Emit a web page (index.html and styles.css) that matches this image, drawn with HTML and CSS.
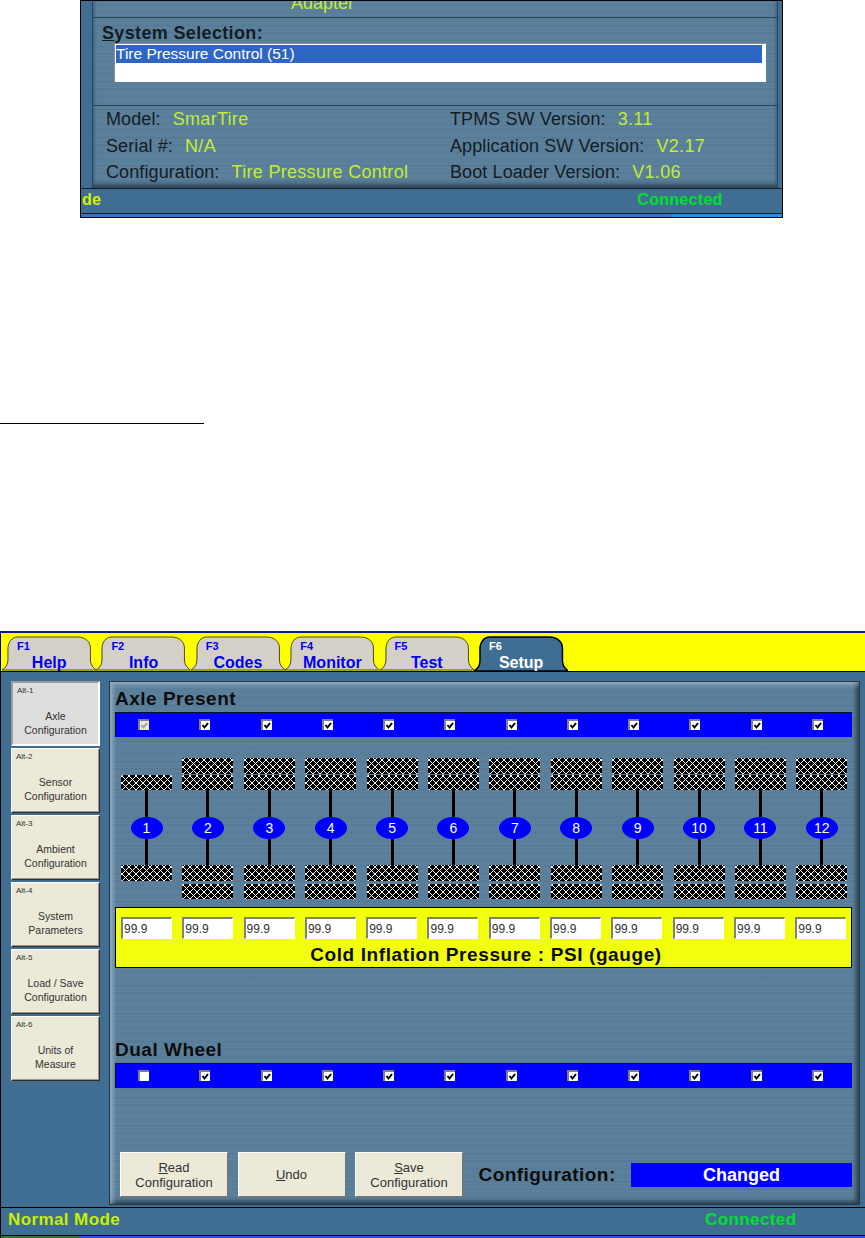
FILE: index.html
```html
<!DOCTYPE html>
<html lang="en">
  <head>
    <meta charset="UTF-8" />
    <meta name="viewport" content="width=device-width, initial-scale=1.0" />
    <title>TPMS Setup</title>
    <link rel="stylesheet" href="styles.css">
  </head>
  <body>
    <div class="shot">
      <div class="shot-panel">
        <div class="adapter"><span>Adapter</span></div>
        <div class="selection">
          <div class="selection-title"><u>S</u>ystem Selection:</div>
          <div class="listbox">
            <div class="listbox-item">Tire Pressure Control (51)</div>
          </div>
        </div>
        <div class="info">
          <div class="info-col">
            <div>Model: <span class="val">SmarTire</span></div>
            <div>Serial #: <span class="val">N/A</span></div>
            <div>Configuration: <span class="val">Tire Pressure Control</span></div>
          </div>
          <div class="info-col">
            <div>TPMS SW Version: <span class="val">3.11</span></div>
            <div>Application SW Version: <span class="val">V2.17</span></div>
            <div>Boot Loader Version: <span class="val">V1.06</span></div>
          </div>
        </div>
      </div>
      <div class="shot-status">
        <span class="mode">de</span>
        <span class="connected">Connected</span>
      </div>
      <div class="shot-strip"></div>
    </div>

    <div class="rule"></div>

    <div class="app">
      <div class="tabs" id="tabs"></div>
      <div class="main">
        <div class="side" id="side"></div>
        <div class="panel">
          <h2 class="title">Axle Present</h2>
          <div class="bar" id="axleChecks"></div>
          <div class="axles" id="axles"></div>
          <div class="pressure">
            <div class="pressure-row" id="pressures"></div>
            <div class="pressure-label">Cold Inflation Pressure : PSI (gauge)</div>
          </div>
          <h2 class="title title-dual">Dual Wheel</h2>
          <div class="bar" id="dualChecks"></div>
          <div class="actions">
            <button class="btn"><u>R</u>ead<br>Configuration</button>
            <button class="btn"><u>U</u>ndo</button>
            <button class="btn"><u>S</u>ave<br>Configuration</button>
            <span class="config-label">Configuration:</span>
            <span class="config-state">Changed</span>
          </div>
        </div>
      </div>
      <div class="status">
        <span class="status-mode">Normal Mode</span>
        <span class="status-conn">Connected</span>
      </div>
      <div class="strip"></div>
    </div>

    <script>
      const tabs = ["Help", "Info", "Codes", "Monitor", "Test", "Setup"];
      const sideItems = ["Axle<br>Configuration", "Sensor<br>Configuration", "Ambient<br>Configuration", "System<br>Parameters", "Load / Save<br>Configuration", "Units of<br>Measure"];
      const axleNumbers = [1, 2, 3, 4, 5, 6, 7, 8, 9, 10, 11, 12];
      const tabPath = "M0 34C4 32 6 28 6 24V13C6 6 10 1 16 1H76C84 1 89 6 89 12V24C89 29 92 32 95 34Z";

      document.getElementById("tabs").innerHTML = tabs.map((name, i) => `
        <div class="tab ${name === "Setup" ? "tab-active" : ""}">
          <svg class="tab-shape" viewBox="0 0 95 35" preserveAspectRatio="none"><path d="${tabPath}"/></svg>
          <div class="tab-key">F${i + 1}</div>
          <div class="tab-name">${name}</div>
        </div>
      `).join("");

      document.getElementById("side").innerHTML = sideItems.map((label, i) => `
        <div class="side-btn ${i === 0 ? "side-active" : ""}">
          <div class="side-key">Alt-${i + 1}</div>
          <div class="side-label">${label}</div>
        </div>
      `).join("");

      function checkbox(state) {
        const tick = state === "empty" ? "" : '<svg viewBox="0 0 9 9"><path d="M1.5 4l2 2.5L7 2"/></svg>';
        return `<span class="check check-${state}">${tick}</span>`;
      }

      document.getElementById("axleChecks").innerHTML = axleNumbers.map(n => checkbox(n === 1 ? "off" : "on")).join("");
      document.getElementById("dualChecks").innerHTML = axleNumbers.map(n => checkbox(n === 1 ? "empty" : "on")).join("");

      document.getElementById("axles").innerHTML = axleNumbers.map(n => `
        <div class="axle">
          <div class="tires tires-top">${n > 1 ? '<div class="tire"></div>' : ""}<div class="tire"></div></div>
          <div class="shaft"></div>
          <div class="oval">${n}</div>
          <div class="shaft"></div>
          <div class="tires tires-bottom"><div class="tire"></div>${n > 1 ? '<div class="tire"></div>' : ""}</div>
        </div>
      `).join("");

      document.getElementById("pressures").innerHTML = axleNumbers.map(() => '<input class="psi" type="text" value="99.9" />').join("");
    </script>
  </body>
</html>
```

FILE: styles.css
```css
* {
  box-sizing: border-box;
}
html, body {
  margin: 0;
  height: 1238px;
  overflow: hidden;
}
body {
  font-family: "Liberation Sans", Arial, sans-serif;
  background-color: #fff;
  color: #000;
}

/* small screenshot on top */
.shot {
  width: 703px;
  height: 218px;
  margin-left: 80px;
  border: 1px solid #000;
  background-color: #3f6e92;
}
.shot-panel {
  height: 187px;
  margin: 0 4px 0 11px;
  border-left: 1px solid #2c4556;
  border-right: 1px solid #2c4556;
  color: #141c24;
  background-color: #5a7f9b;
  background-image:
    repeating-linear-gradient(0deg, rgba(255, 255, 255, 0.025) 0 1px, transparent 1px 4px),
    repeating-linear-gradient(0deg, rgba(0, 0, 0, 0.025) 0 2px, transparent 2px 7px);
  box-shadow: inset 0 -4px 4px rgba(0, 0, 0, 0.45);
}
.adapter {
  display: flex;
  align-items: flex-end;
  justify-content: center;
  height: 17px;
  padding: 0 225px 5px 0;
  overflow: hidden;
  border-bottom: 1px solid #2c4556;
  font-size: 18px;
  line-height: 18px;
  color: #c3ec35;
}
.adapter span {
  flex: none;
}
.selection {
  height: 88px;
  padding: 6px 0 0 9px;
  border-bottom: 1px solid #2c4556;
}
.selection-title {
  font-size: 18px;
  line-height: 19px;
  font-weight: bold;
  letter-spacing: 0.35px;
}
.listbox {
  width: 652px;
  height: 39px;
  margin: 0 0 0 12px;
  padding: 1px 4px 0 1px;
  background-color: #fff;
  border-top: 1px solid #8a8f95;
  border-left: 1px solid #8a8f95;
}
.listbox-item {
  height: 18px;
  font-size: 15.5px;
  line-height: 18px;
  color: #fff;
  background-color: #2f65c4;
}
.info {
  display: flex;
  padding-left: 13px;
  font-size: 18px;
  line-height: 26.5px;
  letter-spacing: 0.1px;
}
.info-col:first-child {
  width: 344px;
}
.val {
  margin-left: 7px;
  letter-spacing: 0.3px;
  color: #c3ec35;
}
.shot-status {
  display: flex;
  align-items: center;
  height: 26px;
  padding-bottom: 3px;
  border-top: 1px solid #10202c;
  border-bottom: 1px solid #10202c;
  font-size: 16px;
  font-weight: bold;
  letter-spacing: 0.3px;
}
.mode {
  margin-left: 1px;
  color: #d4f000;
}
.connected {
  margin-left: 536px;
  color: #00e02c;
}
.shot-strip {
  height: 3px;
  background-image: linear-gradient(90deg, #3a70d0 0 590px, #1e90e8 590px);
}

.rule {
  width: 204px;
  height: 1px;
  margin-top: 205px;
  background-color: #000;
}

/* main application window */
.app {
  width: 865px;
  height: 607px;
  margin-top: 207px;
  border-top: 2px solid #00208a;
  border-left: 1px solid #000;
  background-color: #3f6e92;
}
.tabs {
  display: flex;
  height: 39px;
  padding-left: 1px;
  border-bottom: 1px solid #000;
  background-color: #ffff00;
}
.tab {
  position: relative;
  width: 94.4px;
  height: 39px;
  padding-top: 8px;
  color: #0000f0;
}
.tab-shape {
  position: absolute;
  left: 0;
  top: 3px;
  width: 100%;
  height: 35px;
}
.tab-shape path {
  fill: #d4d0c8;
  stroke: #4a4a20;
  stroke-width: 1;
}
.tab-active {
  color: #fff;
}
.tab-active .tab-shape {
  height: 36px;
}
.tab-active .tab-shape path {
  fill: #3f6e92;
  stroke: #000;
  stroke-width: 1.5;
}
.tab-key {
  position: relative;
  padding-left: 15px;
  font-size: 11px;
  line-height: 11px;
  font-weight: bold;
}
.tab-name {
  position: relative;
  margin-top: 2px;
  font-size: 16px;
  line-height: 18px;
  font-weight: bold;
  text-align: center;
}

.main {
  display: flex;
  height: 535px;
  padding: 9px 0 2px 10px;
}
.side {
  display: flex;
  flex-direction: column;
  gap: 2.5px;
  width: 98px;
}
.side-btn {
  width: 89px;
  height: 64.5px;
  padding: 3px 0 0 4px;
  background-color: #ece9d8;
  border: 1px solid;
  border-color: #fff #30302a #30302a #fff;
  box-shadow: inset -1px -1px 0 #9a988a;
  color: #333;
  text-align: center;
}
.side-active {
  background-color: #dedede;
  border-width: 2px;
  border-color: #9c9c9c #fff #fff #9c9c9c;
  box-shadow: none;
}
.side-key {
  font-size: 8px;
  line-height: 10px;
  text-align: left;
}
.side-label {
  margin-top: 13px;
  padding-right: 4px;
  font-size: 10.5px;
  line-height: 14px;
}

.panel {
  width: 751px;
  height: 524px;
  padding: 7px 7px 7px 5px;
  border: 1px solid #22394a;
  background-color: #5a7f9b;
  background-image:
    repeating-linear-gradient(0deg, rgba(255, 255, 255, 0.025) 0 1px, transparent 1px 4px),
    repeating-linear-gradient(0deg, rgba(0, 0, 0, 0.025) 0 2px, transparent 2px 7px);
  box-shadow: inset 4px 4px 4px -1px rgba(255, 255, 255, 0.35), inset -4px -4px 4px -1px rgba(0, 0, 0, 0.5);
}
.title {
  height: 23px;
  margin: 0;
  font-size: 19px;
  line-height: 20px;
  font-weight: bold;
  letter-spacing: 0.5px;
  color: #0c0c0c;
}
.title-dual {
  margin-top: 72px;
}
.bar {
  display: grid;
  grid-template-columns: repeat(12, 55px);
  column-gap: 6.25px;
  justify-items: center;
  align-items: center;
  width: 737px;
  height: 25px;
  background-color: #0000ff;
  border: 1px solid #001028;
  border-bottom-color: #0000ff;
  border-right-color: #0000ff;
}
.check {
  display: block;
  width: 11px;
  height: 11px;
  background-color: #fff;
  border-top: 2px solid #808080;
  border-left: 2px solid #808080;
}
.check svg {
  display: block;
  width: 9px;
  height: 9px;
}
.check path {
  fill: none;
  stroke: #000;
  stroke-width: 2;
}
.check-off {
  background-color: #ece9d8;
}
.check-off path {
  stroke: #a0a0a0;
}

.axles {
  display: grid;
  grid-template-columns: repeat(12, 51px);
  column-gap: 10.4px;
  margin-top: 20px;
  padding-left: 6px;
}
.axle {
  display: flex;
  flex-direction: column;
  align-items: center;
  height: 141px;
}
.tires {
  display: flex;
  flex-direction: column;
  width: 100%;
  height: 33px;
}
.tires-top {
  justify-content: flex-end;
  gap: 1px;
}
.tires-bottom {
  gap: 3px;
}
.tire {
  flex: none;
  height: 15.5px;
  border-radius: 2px;
  background-color: #000;
  background-image:
    repeating-linear-gradient(45deg, #fff 0 1px, transparent 1px 4.95px),
    repeating-linear-gradient(-45deg, #fff 0 1px, transparent 1px 4.95px);
}
.shaft {
  width: 3px;
  height: 26.5px;
  background-color: #000;
}
.oval {
  width: 32px;
  height: 22px;
  border-radius: 50%;
  background-color: #0000ff;
  color: #fff;
  font-size: 14px;
  line-height: 22px;
  text-align: center;
}

.pressure {
  width: 737px;
  height: 61px;
  margin-top: 9px;
  padding: 9px 0 0 5px;
  border: 1px solid #000;
  background-color: #f2ff0c;
}
.pressure-row {
  display: grid;
  grid-template-columns: repeat(12, 51px);
  column-gap: 10.3px;
}
.psi {
  width: 51px;
  height: 22px;
  padding: 0 0 0 1px;
  font-family: "Liberation Sans", Arial, sans-serif;
  font-size: 12px;
  color: #333;
  background-color: #fff;
  border: 1px solid #fff;
  border-top: 2px solid #808080;
  border-left: 2px solid #808080;
  outline: none;
}
.pressure-label {
  margin-top: 5px;
  font-size: 19px;
  line-height: 22px;
  font-weight: bold;
  letter-spacing: 0.6px;
  text-align: center;
  color: #0c0c0c;
}

.actions {
  display: flex;
  align-items: center;
  width: 737px;
  height: 45px;
  margin-top: 64px;
  padding-left: 5px;
}
.btn {
  flex: none;
  width: 108px;
  height: 45px;
  margin-right: 9.5px;
  padding: 0;
  font-family: "Liberation Sans", Arial, sans-serif;
  font-size: 13px;
  line-height: 15px;
  color: #333;
  background-color: #ece9d8;
  border: 1px solid;
  border-color: #fff #77756a #77756a #fff;
}
.config-label {
  margin-left: 6px;
  font-size: 19px;
  font-weight: bold;
  letter-spacing: 0.45px;
  color: #0c0c0c;
}
.config-state {
  width: 221px;
  height: 24px;
  margin-left: auto;
  font-size: 18px;
  line-height: 24px;
  font-weight: bold;
  text-align: center;
  color: #fff;
  background-color: #0000ff;
}

.status {
  display: flex;
  align-items: center;
  height: 29px;
  padding: 0 0 3px 7px;
  border-top: 1px solid #000;
  border-bottom: 1px solid #000;
  font-size: 17px;
  font-weight: bold;
  letter-spacing: 0.4px;
}
.status-mode {
  width: 697px;
  color: #c8f000;
}
.status-conn {
  color: #00e02c;
}
.strip {
  height: 2px;
  background-image: linear-gradient(90deg, #2f7a2f 0 79px, #2a5ad0 79px);
}
```
